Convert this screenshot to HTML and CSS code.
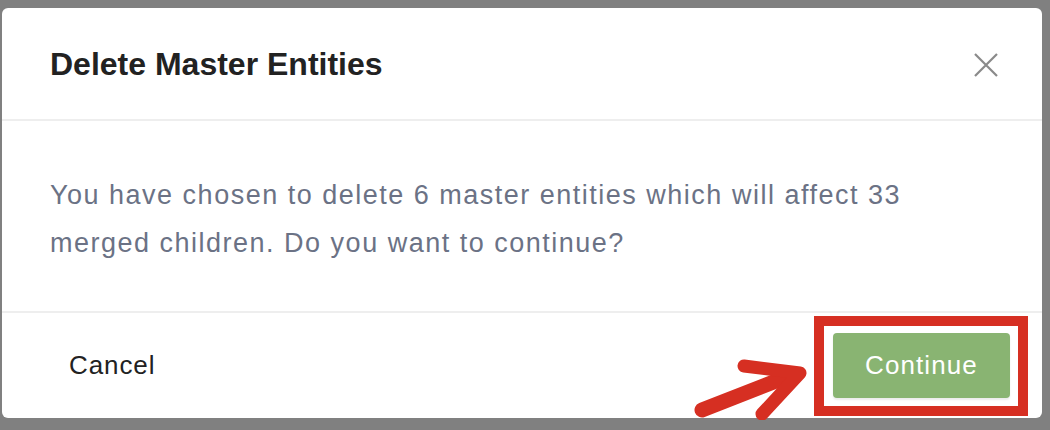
FILE: index.html
```html
<!DOCTYPE html>
<html>
<head>
<meta charset="utf-8">
<link rel="stylesheet" href="styles.css">
</head>
<body>
<div class="backdrop">
  <div class="modal">
    <div class="modal-header">
      <h1 class="modal-title">Delete Master Entities</h1>
      <button class="close-btn" aria-label="Close">
        <svg width="24" height="24" viewBox="0 0 24 24"><path d="M1 1 L23 23 M23 1 L1 23" stroke="#8a8a8a" stroke-width="2.2" fill="none"/></svg>
      </button>
    </div>
    <div class="modal-body">
      <p class="message">You have chosen to delete 6 master entities which will affect 33 merged children. Do you want to continue?</p>
    </div>
    <div class="modal-footer">
      <button class="cancel-btn">Cancel</button>
      <div class="highlight">
        <button class="continue-btn">Continue</button>
      </div>
    </div>
  </div>
  <svg class="arrow" width="140" height="80" viewBox="0 0 140 80">
    <path d="M8 70 L100 34" stroke="#d62f22" stroke-width="15" stroke-linecap="round" fill="none"/>
    <path d="M50 26 L106 33 L68 74" stroke="#d62f22" stroke-width="13" stroke-linecap="round" stroke-linejoin="round" fill="none"/>
  </svg>
</div>
</body>
</html>
```
FILE: styles.css
```css
* { box-sizing: border-box; }
html, body { margin: 0; padding: 0; }
body {
  width: 1050px;
  height: 430px;
  overflow: hidden;
  background: #808080;
  font-family: "Liberation Sans", Arial, Helvetica, sans-serif;
}
.backdrop {
  position: relative;
  width: 1050px;
  height: 430px;
  padding: 8px 8px 0 2px;
}
.modal {
  width: 1040px;
  height: 410px;
  background: #fff;
  border-radius: 6px;
  display: flex;
  flex-direction: column;
  overflow: hidden;
}
.modal-header {
  height: 113px;
  flex: none;
  display: flex;
  align-items: center;
  justify-content: space-between;
  padding: 2px 44px 0 48px;
  border-bottom: 2px solid #eeeeee;
}
.modal-title {
  margin: 0;
  font-size: 32px;
  font-weight: 700;
  color: #222;
}
.close-btn {
  border: 0;
  background: none;
  padding: 0;
  width: 24px;
  height: 24px;
  display: flex;
}
.modal-body {
  height: 192px;
  flex: none;
  display: flex;
  align-items: center;
  padding: 0 48px;
  border-bottom: 2px solid #eeeeee;
}
.message {
  margin: 0;
  font-size: 27px;
  line-height: 48px;
  letter-spacing: 1.5px;
  color: #6b7285;
  max-width: 900px;
  padding-top: 6px;
}
.modal-footer {
  flex: 1;
  display: flex;
  align-items: center;
  justify-content: space-between;
  padding: 0 14px 0 50px;
}
.cancel-btn {
  border: 0;
  background: none;
  padding: 0 17px;
  font-family: inherit;
  font-size: 26px;
  letter-spacing: 0.9px;
  color: #222;
}
.highlight {
  border: 10px solid #d62f22;
  padding: 7px 8px 8px 9px;
  background: #fff;
}
.continue-btn {
  display: block;
  width: 177px;
  height: 65px;
  border: 0;
  border-radius: 4px;
  background: #89b472;
  color: #fff;
  font-family: inherit;
  font-size: 26px;
  letter-spacing: 1.1px;
  padding-top: 2px;
  box-shadow: 0 2px 2px rgba(0,0,0,0.08);
}
.arrow {
  position: absolute;
  left: 694px;
  top: 340px;
}
```
